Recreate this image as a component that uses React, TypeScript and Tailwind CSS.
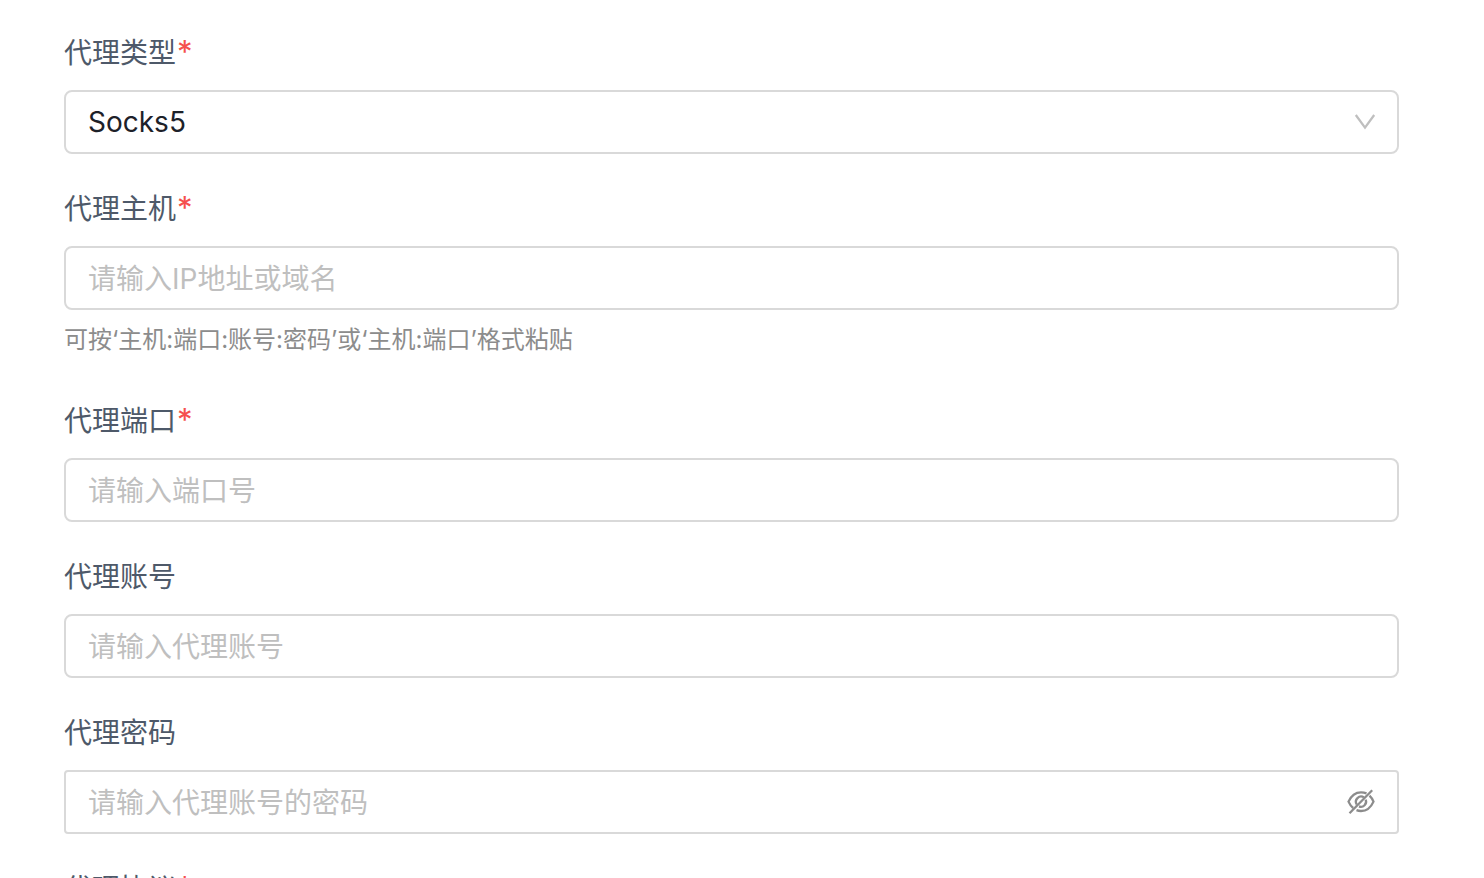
import { useState } from "react";
import type { ReactNode } from "react";

const control =
  "block h-16 w-full appearance-none border-2 border-[#d9d9d9] bg-white px-[22px] text-[28px] text-[#1d2129] outline-none placeholder:text-[#bfbfbf] focus:border-[#4096ff]";

function Field({
  id,
  label,
  required,
  children,
}: {
  id: string;
  label: string;
  required?: boolean;
  children: ReactNode;
}) {
  return (
    <div>
      <label htmlFor={id} className="mb-3.5 block text-[28px] leading-[46px] text-[#4e5969]">
        {label}
        {required && <span className="ml-px text-[31px] leading-none text-[#f5504e]">*</span>}
      </label>
      {children}
    </div>
  );
}

function ChevronIcon() {
  return (
    <svg viewBox="0 0 24 24" className="h-6 w-6" fill="none" stroke="#bfbfbf" strokeWidth="2.3" aria-hidden="true">
      <path d="M2.8 5 12 17.6 21.2 5" />
    </svg>
  );
}

function EyeOffIcon() {
  return (
    <svg viewBox="0 0 28 28" className="h-7 w-7" fill="none" stroke="#8c8c8c" strokeWidth="2.3" aria-hidden="true">
      <path d="M19.5 5.4C17.9 4.7 16 4.3 14 4.3 8.6 4.3 4.2 7.6 1.5 13.6 2.7 16.4 4.3 18.4 6.2 20" />
      <path d="M22.5 7.6C24.1 9.1 25.5 11.1 26.5 13.6 23.8 19.7 19.4 23 14 23 12.4 23 10.9 22.7 9.5 22.1" />
      <path d="M17 9.4A5.2 5.2 0 0 0 9.8 16.6M18.7 11.6A5.2 5.2 0 0 1 12 18.4" />
      <path d="M2.5 25.2 25.2 2.2" />
    </svg>
  );
}

export default function App() {
  const [visible, setVisible] = useState(false);
  return (
    <main className="h-screen overflow-hidden bg-white font-['Inter','Noto_Sans_CJK_SC',sans-serif]">
      <form className="flex flex-col gap-8 pt-[30px] pr-[85px] pl-16">
        <Field id="type" label="代理类型" required>
          <div className="relative">
            <select id="type" className={`${control} rounded-lg`}>
              <option>Socks5</option>
            </select>
            <span className="pointer-events-none absolute inset-y-0 right-[22px] flex items-center">
              <ChevronIcon />
            </span>
          </div>
        </Field>
        <Field id="host" label="代理主机" required>
          <input id="host" className={`${control} rounded-lg pt-0.5`} placeholder="请输入IP地址或域名" />
          <p className="pt-3 pb-2 text-2xl leading-9 text-[#8c8c8c]">
            可按‘主机:端口:账号:密码’或‘主机:端口’格式粘贴
          </p>
        </Field>
        <Field id="port" label="代理端口" required>
          <input id="port" className={`${control} rounded-lg pt-0.5`} placeholder="请输入端口号" />
        </Field>
        <Field id="account" label="代理账号">
          <input id="account" className={`${control} rounded-lg pt-0.5`} placeholder="请输入代理账号" />
        </Field>
        <Field id="password" label="代理密码">
          <div className="relative">
            <input
              id="password"
              type={visible ? "text" : "password"}
              className={`${control} rounded-sm pt-0.5`}
              placeholder="请输入代理账号的密码"
            />
            <button
              type="button"
              aria-label="显示密码"
              onClick={() => setVisible(!visible)}
              className="absolute inset-y-0 right-6 flex items-center"
            >
              <EyeOffIcon />
            </button>
          </div>
        </Field>
        <Field id="protocol" label="代理协议" required>
          <select id="protocol" className={`${control} rounded-lg`}>
            <option>IPv4</option>
          </select>
        </Field>
      </form>
    </main>
  );
}
